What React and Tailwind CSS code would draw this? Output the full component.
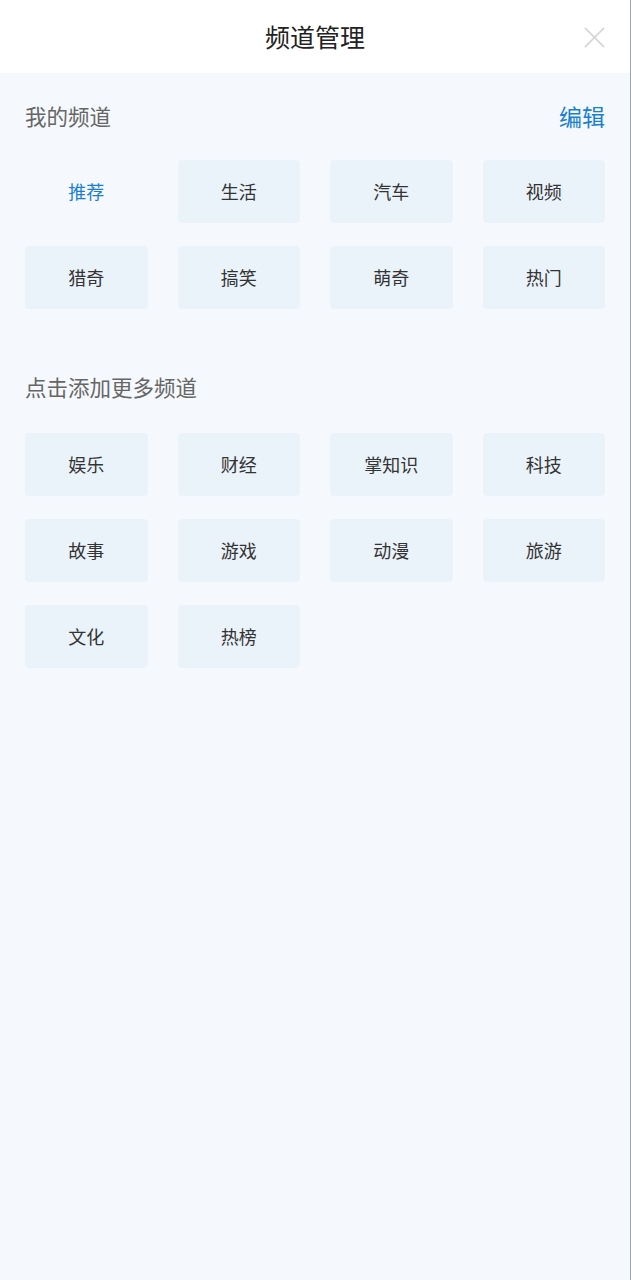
import React from 'react';

const myChannels = ['推荐', '生活', '汽车', '视频', '猎奇', '搞笑', '萌奇', '热门'];
const moreChannels = ['娱乐', '财经', '掌知识', '科技', '故事', '游戏', '动漫', '旅游', '文化', '热榜'];

const ChannelGrid = ({ items, active }) => (
  <div className="grid grid-cols-4 gap-x-[30px] gap-y-[23px]">
    {items.map((name) => (
      <div
        key={name}
        className={`h-[63px] rounded flex items-center justify-center text-[18px] ${
          name === active ? 'text-[#1a7fd1]' : 'bg-[#eaf2fa] text-[#333]'
        }`}
      >
        {name}
      </div>
    ))}
  </div>
);

export default function App() {
  return (
    <div
      className="min-h-[1280px] bg-[#f5f9fd] border-r border-[#9da3a8]"
      style={{ fontFamily: '"Noto Sans CJK SC", "Noto Sans", sans-serif' }}
    >
      {/* Header */}
      <div className="relative h-[73px] bg-white flex items-center justify-center">
        <h1 className="text-[25px] text-[#222]">频道管理</h1>
        <button className="absolute right-[24px] top-[26px] w-[23px] h-[23px] text-[#d4d4d4]">
          <svg viewBox="0 0 24 24" className="w-full h-full" fill="none" stroke="currentColor" strokeWidth="1.6">
            <path d="M2 2L22 22M22 2L2 22" />
          </svg>
        </button>
      </div>

      <div className="px-[25px]">
        {/* My channels */}
        <div className="flex items-center justify-between h-[30px] mt-[28px]">
          <span className="text-[21.5px] text-[#666]">我的频道</span>
          <span className="text-[23px] text-[#1a7fd1]">编辑</span>
        </div>
        <div className="pt-[29px]">
          <ChannelGrid items={myChannels} active="推荐" />
        </div>

        {/* More channels */}
        <div className="mt-[63px] h-[30px] flex items-center">
          <span className="text-[21.5px] text-[#666]">点击添加更多频道</span>
        </div>
        <div className="pt-[31px]">
          <ChannelGrid items={moreChannels} />
        </div>
      </div>
    </div>
  );
}
